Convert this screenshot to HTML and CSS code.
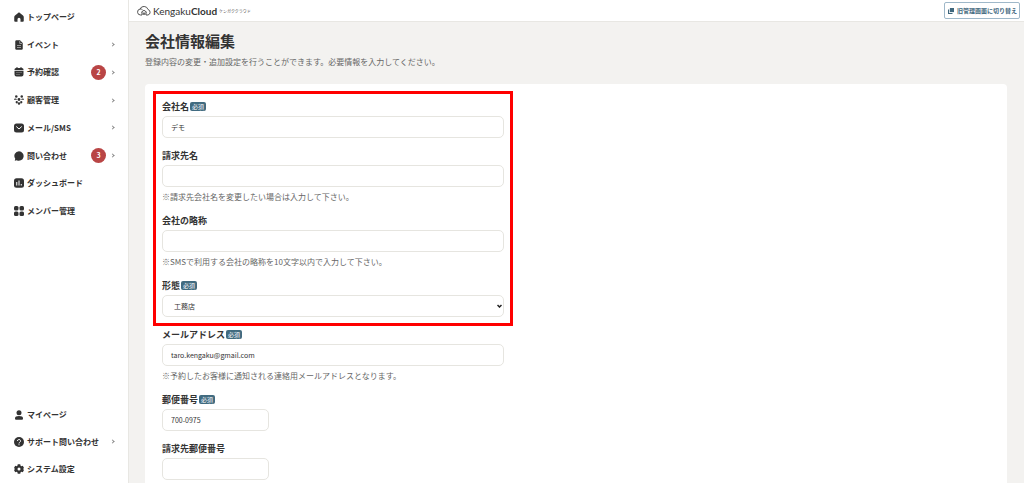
FILE: index.html
```html
<!DOCTYPE html>
<html lang="ja">
<head>
<meta charset="utf-8">
<meta name="viewport" content="width=device-width, initial-scale=1">
<title>会社情報編集 | KengakuCloud</title>
<link rel="stylesheet" href="styles.css">
</head>
<body>
<div class="app">
  <nav class="sidebar" aria-label="メインメニュー">
    <ul class="menu menu-main">
      <li><a class="menu-link" href="#">
        <svg class="icon" viewBox="0 0 20 20"><path d="M10 0.500 2 7Q.5 8.500.5 10v8q0 1.500 2 1.500H7v-5a3 3 0 0 1 6 0v5h4.500q2 0 2-1.500v-8q0-1.500-1.500-3z"/></svg>
        <span class="menu-text">トップページ</span></a></li>
      <li><a class="menu-link" href="#">
        <svg class="icon" viewBox="0 0 20 20"><path d="M5 .5h7l5.500 5.500v11q0 2.500-2.500 2.500H5q-2.500 0-2.500-2.500V3Q2.500.5 5 .5z"/><path class="cut thin" d="M11.500 2v5H16M6 11h8M6 15h8"/></svg>
        <span class="menu-text">イベント</span><span class="chevron"></span></a></li>
      <li><a class="menu-link" href="#">
        <svg class="icon" viewBox="0 0 20 20"><path d="M4 2h1V0h2v2h6V0h2v2h1q3 0 3 3v1H1V5q0-3 3-3zM1 7.500h18V15q0 4-4 4H5q-4 0-4-4z"/><path class="cut thin" d="M5 11h2m2 0h2m2 0h2M5 15h2m2 0h2"/></svg>
        <span class="menu-text">予約確認</span><span class="badge">2</span><span class="chevron"></span></a></li>
      <li><a class="menu-link" href="#">
        <svg class="icon" viewBox="0 0 20 20"><circle cx="4.500" cy="3" r="2.500"/><circle cx="15.500" cy="3" r="2.500"/><circle cx="10" cy="9" r="2.800"/><path d="M0 9q0-2 2.500-2T6 9.500H0zM20 9q0-2-2.500-2T14 9.500h6z"/><circle cx="5.500" cy="14.500" r="2.300"/><circle cx="14.500" cy="14.500" r="2.300"/><circle cx="10" cy="17" r="2.500"/></svg>
        <span class="menu-text">顧客管理</span><span class="chevron"></span></a></li>
      <li><a class="menu-link" href="#">
        <svg class="icon" viewBox="0 0 20 20"><rect x="0" y="1" width="20" height="18" rx="5"/><path class="cut" d="m4.500 7 5.500 5 5.500-5"/></svg>
        <span class="menu-text">メール/SMS</span><span class="chevron"></span></a></li>
      <li><a class="menu-link" href="#">
        <svg class="icon" viewBox="0 0 20 20"><path d="M10 .5a9.500 9.500 0 1 1-4.500 18l-4 1 1-4A9.500 9.500 0 0 1 10 .5z"/></svg>
        <span class="menu-text">問い合わせ</span><span class="badge">3</span><span class="chevron"></span></a></li>
      <li><a class="menu-link" href="#">
        <svg class="icon" viewBox="0 0 20 20"><rect x="0" y="0.500" width="20" height="19" rx="5"/><path class="cut" d="M5.500 8v7M10 5v10M14.500 12v3"/></svg>
        <span class="menu-text">ダッシュボード</span></a></li>
      <li><a class="menu-link" href="#">
        <svg class="icon" viewBox="0 0 20 20"><rect x="0" y="0" width="9" height="9" rx="3"/><rect x="11" y="0" width="9" height="9" rx="3"/><rect x="0" y="11" width="9" height="9" rx="3"/><rect x="11" y="11" width="9" height="9" rx="3"/></svg>
        <span class="menu-text">メンバー管理</span></a></li>
    </ul>
    <ul class="menu menu-sub">
      <li><a class="menu-link" href="#">
        <svg class="icon" viewBox="0 0 20 20"><circle cx="10" cy="5.500" r="5"/><path d="M2 16.500Q2 12 10 12t8 4.500q0 3-2 3H4q-2 0-2-3z"/></svg>
        <span class="menu-text">マイページ</span></a></li>
      <li><a class="menu-link" href="#">
        <svg class="icon" viewBox="0 0 20 20"><circle cx="10" cy="10" r="10"/><path class="cut" d="M7 8a3 3 0 1 1 4.500 2.500Q10 11.300 10 13M10 14.500v2"/></svg>
        <span class="menu-text">サポート問い合わせ</span><span class="chevron"></span></a></li>
      <li><a class="menu-link" href="#">
        <svg class="icon" viewBox="0 0 20 20"><path fill-rule="evenodd" d="M7.500.5h5l.7 2.900 1.500.9 2.900-.8L20 8l-2 2 2 2-2.400 4.500-2.900-.8-1.500.9-.7 2.900h-5l-.7-2.900-1.500-.9-2.900.8L0 12l2-2-2-2 2.400-4.500 2.900.8 1.500-.9zM10 7a3 3 0 1 0 0 6 3 3 0 0 0 0-6z"/></svg>
        <span class="menu-text">システム設定</span></a></li>
    </ul>
  </nav>

  <div class="content">
    <header class="topbar">
      <a class="logo" href="#">
        <svg class="logo-mark" viewBox="0 0 28 20"><path d="M10 18H7a6 6 0 0 1-1-11.900A8.500 8.500 0 0 1 22 7a5.700 5.700 0 0 1 0 11h-4M6 6q3-.4 5 1.500M8.500 12.500 14 8.500l5.500 4M10 12v6m8-6v6M12.500 18v-4h3v4"/></svg>
        <span class="logo-name">Kengaku<strong>Cloud</strong></span>
        <span class="logo-kana">ケンガククラウド</span>
      </a>
      <button class="switch" type="button">
        <svg class="switch-icon" viewBox="0 0 16 16"><path d="M5 0h11v11H5z"/><path d="M0 4h3v9h9v3H0z"/></svg>
        旧管理画面に切り替え
      </button>
    </header>

    <main class="page">
      <h1 class="title">会社情報編集</h1>
      <p class="lead">登録内容の変更・追加設定を行うことができます。必要情報を入力してください。</p>

      <form class="card">
        <div class="highlight">
          <div class="field">
            <div class="label-row"><label for="company">会社名</label><span class="required">必須</span></div>
            <input class="control" id="company" type="text" value="デモ">
          </div>
          <div class="field">
            <div class="label-row"><label for="billing">請求先名</label></div>
            <input class="control" id="billing" type="text">
            <p class="help">※請求先会社名を変更したい場合は入力して下さい。</p>
          </div>
          <div class="field">
            <div class="label-row"><label for="short">会社の略称</label></div>
            <input class="control" id="short" type="text">
            <p class="help">※SMSで利用する会社の略称を10文字以内で入力して下さい。</p>
          </div>
          <div class="field">
            <div class="label-row"><label for="kind">形態</label><span class="required">必須</span></div>
            <div class="select-box">
              <select class="control select" id="kind"><option>工務店</option></select>
              <svg class="select-arrow" viewBox="0 0 10 8"><path d="m1 2 4 4 4-4"/></svg>
            </div>
          </div>
        </div>
        <div class="field">
          <div class="label-row"><label for="email">メールアドレス</label><span class="required">必須</span></div>
          <input class="control" id="email" type="email" value="taro.kengaku@gmail.com">
          <p class="help">※予約したお客様に通知される連絡用メールアドレスとなります。</p>
        </div>
        <div class="field">
          <div class="label-row"><label for="zip">郵便番号</label><span class="required">必須</span></div>
          <input class="control control-short" id="zip" type="text" value="700-0975">
        </div>
        <div class="field">
          <div class="label-row"><label for="billing-zip">請求先郵便番号</label></div>
          <input class="control control-short" id="billing-zip" type="text">
        </div>
      </form>
    </main>
  </div>
</div>
</body>
</html>
```
FILE: styles.css
```css
* {
  box-sizing: border-box;
}

body {
  margin: 0;
  color: #333;
  background: #f3f2f0;
  font-family: "Noto Sans CJK JP", sans-serif;
  font-size: 8px;
  line-height: 12px;
}

h1, p, ul {
  margin: 0;
  padding: 0;
}

a {
  color: inherit;
  text-decoration: none;
}

.app {
  display: flex;
  height: 100vh;
  overflow: hidden;
}

/* Sidebar */
.sidebar {
  display: flex;
  flex: 0 0 129px;
  flex-direction: column;
  justify-content: space-between;
  padding-top: 3px;
  background: #fff;
  border-right: 1px solid #e8e7e3;
}

.menu {
  display: grid;
  grid-auto-rows: 1fr;
  list-style: none;
}

.menu-main {
  height: 222px;
}

.menu-sub {
  height: 82px;
}

.menu-link {
  display: flex;
  align-items: center;
  height: 100%;
  padding: 0 14px;
  font-weight: 700;
}

.icon {
  flex: none;
  width: 10px;
  height: 10px;
  margin-right: 3px;
  fill: #333;
}

.cut {
  fill: none;
  stroke: #fff;
  stroke-width: 2;
}

.thin {
  stroke-width: 1;
}

.menu-text {
  flex: 1;
  white-space: nowrap;
}

.badge {
  width: 15px;
  height: 15px;
  margin-right: 5px;
  border-radius: 50%;
  background: #b94545;
  color: #fff;
  font-size: 7px;
  line-height: 15px;
  text-align: center;
}

.chevron {
  width: 3px;
  height: 3px;
  border: solid #888;
  border-width: 1px 1px 0 0;
  transform: rotate(45deg);
}

/* Header */
.content {
  flex: 1;
  min-width: 0;
}

.topbar {
  display: flex;
  align-items: center;
  justify-content: space-between;
  height: 22px;
  padding: 0 4px 0 8px;
  background: #fff;
  border-bottom: 1px solid #e8e7e3;
}

.logo {
  display: flex;
  align-items: center;
}

.logo-mark {
  width: 14px;
  height: 10px;
  margin-right: 2px;
  fill: none;
  stroke: #555;
  stroke-width: 2;
}

.logo-name {
  font-family: Lato, sans-serif;
  font-size: 10px;
}

.logo-kana {
  margin-left: 2px;
  color: #555;
  font-size: 4px;
}

.switch {
  display: flex;
  align-items: center;
  gap: 3px;
  height: 17px;
  padding: 0 2px 0 3px;
  border: 1px solid #9fb8c9;
  border-radius: 2px;
  background: #fff;
  color: #3f677d;
  font-family: inherit;
  font-size: 6px;
  font-weight: 700;
}

.switch-icon {
  width: 6px;
  height: 6px;
  fill: #3f677d;
}

/* Page */
.page {
  padding: 8px 17px 0 16px;
}

.title {
  font-size: 15px;
  line-height: 22px;
}

.lead {
  margin-top: 4px;
  color: #666;
}

.card {
  margin-top: 16px;
  padding: 16px 17px;
  border-radius: 4px;
  background: #fff;
}

.highlight {
  position: relative;
  width: 342px;
  max-width: 100%;
  margin-bottom: 11px;
}

.highlight::after {
  content: "";
  position: absolute;
  inset: -9px;
  border: 3px solid #f00;
  pointer-events: none;
}

.field + .field {
  margin-top: 11px;
}

.label-row {
  display: flex;
  align-items: center;
  gap: 1px;
  height: 13px;
  margin-bottom: 3px;
  font-size: 9px;
  font-weight: 700;
}

.required {
  padding: 0 2px;
  border-radius: 2px;
  background: #416b80;
  color: #fff;
  font-size: 6px;
  font-weight: 400;
  line-height: 9px;
}

.control {
  display: block;
  width: 342px;
  max-width: 100%;
  height: 22px;
  padding: 0 8px;
  border: 1px solid #e6e5e0;
  border-radius: 5px;
  background: #fff;
  color: #333;
  font-family: inherit;
  font-size: 7px;
}

.control-short {
  width: 107px;
}

.select-box {
  position: relative;
}

.select {
  padding: 0 11px;
  appearance: none;
}

.select-arrow {
  position: absolute;
  top: 9px;
  right: 2px;
  width: 5px;
  height: 4px;
  fill: none;
  stroke: #222;
  stroke-width: 3;
  pointer-events: none;
}

.help {
  margin-top: 4px;
  color: #666;
}
```
